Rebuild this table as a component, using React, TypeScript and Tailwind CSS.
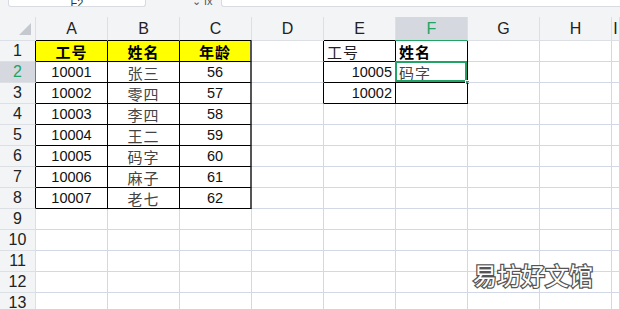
import React from 'react';

const COLS = ['A', 'B', 'C', 'D', 'E', 'F', 'G', 'H', 'I'];
const ROWS = Array.from({ length: 13 }, (_, i) => i + 1);

type Cell = { text?: string; align?: 'left' | 'center' | 'right'; bold?: boolean; cjk?: boolean; fill?: boolean };

const people = [
  ['10001', '张三', '56'],
  ['10002', '零四', '57'],
  ['10003', '李四', '58'],
  ['10004', '王二', '59'],
  ['10005', '码字', '60'],
  ['10006', '麻子', '61'],
  ['10007', '老七', '62'],
];

const getCell = (r: number, c: number): Cell => {
  if (c <= 2 && r === 1) {
    return { text: ['工号', '姓名', '年龄'][c], align: 'center', bold: true, cjk: true, fill: true };
  }
  if (c <= 2 && r <= 8) {
    return { text: people[r - 2][c], align: 'center', cjk: c === 1 };
  }
  if (c === 4 && r === 1) return { text: '工号', align: 'left', cjk: true };
  if (c === 5 && r === 1) return { text: '姓名', align: 'left', bold: true, cjk: true };
  if (c === 4 && r === 2) return { text: '10005', align: 'right' };
  if (c === 5 && r === 2) return { text: '码字', align: 'left', cjk: true };
  if (c === 4 && r === 3) return { text: '10002', align: 'right' };
  return {};
};

const inTable = (r: number, c: number) => (c <= 2 && r <= 8) || ((c === 4 || c === 5) && r <= 3);

export default function App() {
  return (
    <div className="w-[620px] h-[309px] overflow-hidden bg-white font-['Liberation_Sans','Noto_Sans_CJK_SC',sans-serif] relative">
      {/* formula bar, mostly scrolled out of view */}
      <div className="h-[17px] bg-[#f3f4f6] flex items-start">
        <div className="ml-[8px] w-[138px] h-[7px] bg-white border border-t-0 border-[#d8dbe0] rounded-b-[3px] flex justify-center items-end overflow-hidden">
          <span className="text-[11px] leading-none text-[#333] translate-y-[3px]">F2</span>
        </div>
        <div className="ml-[46px] h-[7px] overflow-hidden text-[11px] leading-none text-[#555]">
          <span className="relative top-[-4px]">⌄ fx</span>
        </div>
        <div className="ml-[8px] flex-1 h-[7px] bg-white border border-t-0 border-r-0 border-[#d8dbe0] rounded-bl-[3px]" />
      </div>

      {/* column headers */}
      <div className="flex h-[24px] bg-[#f3f4f6]">
        <div className="w-[36px] shrink-0 relative border-r border-b border-[#dcdfe4]">
          <div className="absolute right-[4px] bottom-[5px] w-0 h-0 border-l-[12px] border-l-transparent border-b-[12px] border-b-[#c5c8ce]" />
        </div>
        {COLS.map((col, c) => {
          const sel = col === 'F';
          const bottom = sel ? 'border-b-[#21a366]' : c <= 2 || c === 4 ? 'border-b-black' : 'border-b-[#dcdfe4]';
          return (
            <div
              key={col}
              className={`${c === 8 ? 'flex-1' : 'w-[72px] shrink-0'} flex items-center justify-center border-r border-r-[#dcdfe4] border-b ${bottom} text-[16px] ${sel ? 'bg-[#d5d8de] text-[#21a366]' : 'text-[#222]'}`}
            >
              {col}
            </div>
          );
        })}
      </div>

      {/* rows */}
      {ROWS.map((r) => {
        const selRow = r === 2;
        const headRight = selRow ? 'border-r-[#21a366]' : r <= 8 ? 'border-r-black' : 'border-r-[#dcdfe4]';
        return (
          <div key={r} className="flex h-[21px]">
            <div
              className={`w-[36px] shrink-0 flex items-center justify-center border-r border-b border-b-[#dcdfe4] ${headRight} text-[16px] ${selRow ? 'bg-[#d5d8de] text-[#21a366]' : 'bg-[#f3f4f6] text-[#222]'}`}
            >
              {r}
            </div>
            {COLS.map((col, c) => {
              const cell = getCell(r, c);
              const rightBlack = inTable(r, c) || (c === 3 && r <= 3);
              const bottomBlack = inTable(r, c);
              const selected = col === 'F' && r === 2;
              const justify = cell.align === 'left' ? 'justify-start pl-[3px]' : cell.align === 'right' ? 'justify-end pr-[3px]' : 'justify-center';
              const rightColor = c === 2 && r <= 8 ? 'border-r-[#555]' : rightBlack ? 'border-r-black' : 'border-r-[#d3d8e6]';
              return (
                <div
                  key={col}
                  className={`${c === 8 ? 'flex-1' : 'w-[72px] shrink-0'} relative flex items-center ${justify} border-b ${c === 2 && r <= 8 ? 'border-r-2' : 'border-r'} ${rightColor} ${bottomBlack ? 'border-b-black' : 'border-b-[#d3d8e6]'} ${cell.fill ? 'bg-[#ffff00]' : ''} whitespace-nowrap leading-none`}
                >
                  {cell.text && (
                    <span
                      className={`${cell.cjk ? "font-['Noto_Sans_CJK_SC',sans-serif] text-[15px] tracking-[1px]" : 'text-[14.5px]'} ${cell.bold ? 'font-bold text-black' : cell.cjk ? (c === 4 ? 'text-[#222]' : 'text-[#444]') : 'text-[#111]'}`}
                    >
                      {cell.text}
                    </span>
                  )}
                  {selected && (
                    <>
                      <div className="absolute -left-[1px] -top-[1px] right-0 bottom-0 border-2 border-[#21a366] pointer-events-none" />
                      <div className="absolute -right-[3px] -bottom-[3px] w-[5px] h-[5px] bg-[#21a366] border border-white" />
                    </>
                  )}
                </div>
              );
            })}
          </div>
        );
      })}

      {/* watermark */}
      <div className="absolute left-[473px] top-[263px] text-[24px] leading-none text-white font-['Noto_Sans_CJK_SC',sans-serif] [-webkit-text-stroke:2.5px_#555] [paint-order:stroke_fill]">
        易坊好文馆
      </div>
    </div>
  );
}
